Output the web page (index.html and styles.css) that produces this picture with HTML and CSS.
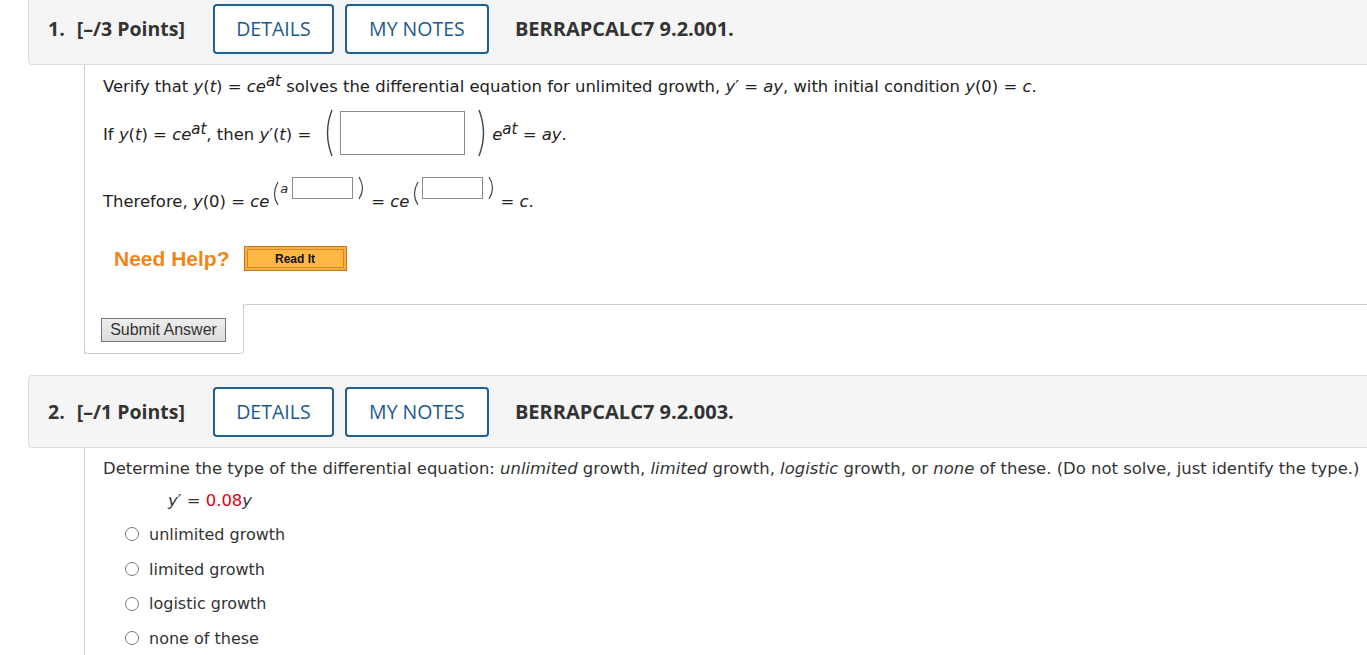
FILE: index.html
```html
<!DOCTYPE html>
<html>
<head>
<meta charset="utf-8">
<link rel="stylesheet" href="styles.css">
</head>
<body>
<div class="page">

  <section class="question">
    <div class="qhead">
      <span class="qnum">1.</span>
      <span class="qpts">[–/3 Points]</span>
      <button class="hbtn details">DETAILS</button>
      <button class="hbtn notes">MY NOTES</button>
      <span class="qref">BERRAPCALC7 9.2.001.</span>
    </div>
    <div class="qbody">
      <div class="content">
        <p class="l1">Verify that <i>y</i>(<i>t</i>) = <i>ce</i><span class="sup"><i>at</i></span> solves the differential equation for unlimited growth, <i>y</i>′ = <i>ay</i>, with initial condition <i>y</i>(0) = <i>c</i>.</p>
        <div class="l2">
          <span class="txt">If <i>y</i>(<i>t</i>) = <i>ce</i><span class="sup"><i>at</i></span>, then <i>y</i>′(<i>t</i>) =</span>
          <svg class="bigparen lp" width="14" height="48" viewBox="0 0 14 48"><path d="M11 1 Q2 24 11 47" fill="none" stroke="#444" stroke-width="1.4"/></svg>
          <span class="box bigbox"></span>
          <svg class="bigparen rp" width="14" height="48" viewBox="0 0 14 48"><path d="M3 1 Q12 24 3 47" fill="none" stroke="#444" stroke-width="1.4"/></svg>
          <span class="txt"><i>e</i><span class="sup2"><i>at</i></span> = <i>ay</i>.</span>
        </div>
        <div class="l3">
          <span class="txt">Therefore, <i>y</i>(0) = <i>ce</i></span>
          <span class="supgrp">
            <svg class="sparen" width="10" height="26" viewBox="0 0 10 26"><path d="M8 2 Q1 14 8 25" fill="none" stroke="#444" stroke-width="1.2"/></svg>
            <i class="sa">a</i>
            <span class="box sbox"></span>
            <svg class="sparen r" width="10" height="26" viewBox="0 0 10 26"><path d="M2 1 Q9 12 2 23" fill="none" stroke="#444" stroke-width="1.2"/></svg>
          </span>
          <span class="txt mid">= <i>ce</i></span>
          <span class="supgrp">
            <svg class="sparen" width="10" height="26" viewBox="0 0 10 26"><path d="M8 2 Q1 14 8 25" fill="none" stroke="#444" stroke-width="1.2"/></svg>
            <span class="box sbox"></span>
            <svg class="sparen r" width="10" height="26" viewBox="0 0 10 26"><path d="M2 1 Q9 12 2 23" fill="none" stroke="#444" stroke-width="1.2"/></svg>
          </span>
          <span class="txt end">= <i>c</i>.</span>
        </div>
        <div class="help">
          <span class="needhelp">Need Help?</span>
          <span class="readit"><span class="readit-in">Read It</span></span>
        </div>
      </div>
      <div class="footer">
        <div class="tab"><button class="submit">Submit Answer</button></div>
        <div class="fill"></div>
      </div>
    </div>
  </section>

  <section class="question q2">
    <div class="qhead">
      <span class="qnum">2.</span>
      <span class="qpts">[–/1 Points]</span>
      <button class="hbtn details">DETAILS</button>
      <button class="hbtn notes">MY NOTES</button>
      <span class="qref">BERRAPCALC7 9.2.003.</span>
    </div>
    <div class="qbody open">
      <div class="content">
        <p class="q2text">Determine the type of the differential equation: <i>unlimited</i> growth, <i>limited</i> growth, <i>logistic</i> growth, or <i>none</i> of these. (Do not solve, just identify the type.)</p>
        <p class="eq"><i>y</i>′ = <span class="red">0.08</span><i>y</i></p>
        <ul class="opts">
          <li><span class="radio"></span>unlimited growth</li>
          <li><span class="radio"></span>limited growth</li>
          <li><span class="radio"></span>logistic growth</li>
          <li><span class="radio"></span>none of these</li>
        </ul>
      </div>
    </div>
  </section>

</div>
</body>
</html>
```

FILE: styles.css
```css
html, body {
  margin: 0;
  padding: 0;
  background: #fff;
  overflow: hidden;
}
.page {
  margin-top: -8px;
  padding-left: 28px;
  width: 1400px;
}
.question {
  margin-bottom: 21px;
}
.qhead {
  display: flex;
  align-items: center;
  height: 71px;
  background: #f5f5f5;
  border: 1px solid #dcdcdc;
  border-radius: 4px;
  padding-left: 19px;
  font-family: "Open Sans", sans-serif;
  color: #333;
}
.qnum {
  font-weight: 700;
  font-size: 19.5px;
  margin-right: 12px;
}
.qpts {
  font-weight: 700;
  font-size: 19.5px;
  margin-right: 28px;
}
.hbtn {
  height: 50px;
  box-sizing: border-box;
  border: 2px solid #1f5f91;
  border-radius: 4px;
  background: #fff;
  color: #1a5a8c;
  font-family: "Open Sans", sans-serif;
  font-size: 19.5px;
  padding: 0;
  margin: 0;
}
.details { width: 121px; margin-right: 11px; }
.notes { width: 144px; margin-right: 26px; }
.qref {
  font-weight: 700;
  font-size: 20px;
}
.qbody {
  margin-left: 56px;
  border-left: 1px solid #ccc;
  font-family: "DejaVu Sans", Verdana, sans-serif;
  font-size: 16.45px;
  color: #222;
}
.content {
  padding-left: 18px;
}
i { font-style: italic; }
.sup {
  font-size: 15px;
  position: relative;
  top: -6px;
}
.sup2 {
  font-size: 15px;
  position: relative;
  top: -6px;
}
.l1 {
  margin: 0;
  padding-top: 12px;
  line-height: 20px;
}
.l2 {
  display: flex;
  align-items: center;
  margin-top: 12px;
  height: 48px;
}
.l2 .txt { line-height: 20px; margin-top: 4px; }
.bigparen { display: block; }
.bigparen.lp { margin-left: 10px; margin-right: 5px; }
.bigparen.rp { margin-left: 11px; margin-right: 2px; }
.box {
  display: inline-block;
  box-sizing: border-box;
  border: 1px solid #8a8a8a;
  background: #fff;
}
.bigbox {
  width: 125px;
  height: 44px;
}
.l3 {
  display: flex;
  align-items: flex-end;
  margin-top: 19px;
  height: 36px;
}
.l3 .txt { line-height: 20px; margin-bottom: 0; }
.supgrp {
  display: flex;
  align-items: flex-start;
  align-self: flex-start;
  height: 36px;
  padding-left: 1px;
}
.sparen { display: block; margin-top: 4px; }
.sparen.r { margin-top: 0; margin-left: 4px; }
.sa { font-size: 13px; margin: 5px 2px 0 0; }
.sbox {
  width: 61px;
  height: 22px;
  margin-top: 1px;
  margin-left: 2px;
}
.mid { margin-left: 4px; }
.end { margin-left: 3px; }
.help {
  display: flex;
  align-items: center;
  margin-top: 34px;
  height: 25px;
  padding-left: 11px;
}
.needhelp {
  font-family: "Liberation Sans", Arial, sans-serif;
  font-weight: 700;
  font-size: 21px;
  color: #f0861b;
  margin-right: 14px;
}
.readit {
  display: flex;
  box-sizing: border-box;
  width: 103px;
  height: 25px;
  border: 1px solid #c7741f;
  background: #fbb03b;
  padding: 2px;
}
.readit-in {
  flex: 1;
  display: flex;
  align-items: center;
  justify-content: center;
  border: 1px solid #d4862e;
  background: #fdb844;
  font-family: "Liberation Sans", Arial, sans-serif;
  font-weight: 700;
  font-size: 12px;
  color: #111;
}
.footer {
  display: flex;
  margin-top: 33px;
}
.tab {
  box-sizing: border-box;
  width: 160px;
  height: 50px;
  margin-left: -1px;
  border: 1px solid #ccc;
  border-top: none;
  border-radius: 0 0 4px 4px;
  padding: 14px 0 0 16px;
}
.fill {
  flex: 1;
  border-top: 1px solid #ccc;
  border-top-left-radius: 3px;
}
.submit {
  box-sizing: border-box;
  width: 125px;
  height: 24px;
  border: 1px solid #777;
  background: linear-gradient(#eee, #dcdcdc);
  font-family: "Liberation Sans", Arial, sans-serif;
  font-size: 16px;
  color: #333;
  padding: 0;
  margin: 0;
}
.q2 .qbody { height: 260px; }
.q2text {
  margin: 0;
  padding-top: 11px;
  line-height: 20px;
  color: #333;
}
.eq {
  margin: 12px 0 0 65px;
  line-height: 20px;
  color: #333;
}
.red { color: #e0001a; }
.opts {
  list-style: none;
  margin: 6px 0 0 0;
  padding: 0 0 0 22px;
  color: #333;
  font-size: 16px;
}
.opts li {
  display: flex;
  align-items: center;
  height: 34.7px;
}
.radio {
  box-sizing: border-box;
  width: 14px;
  height: 14px;
  border: 1.5px solid #777;
  border-radius: 50%;
  margin-right: 10px;
}
```
